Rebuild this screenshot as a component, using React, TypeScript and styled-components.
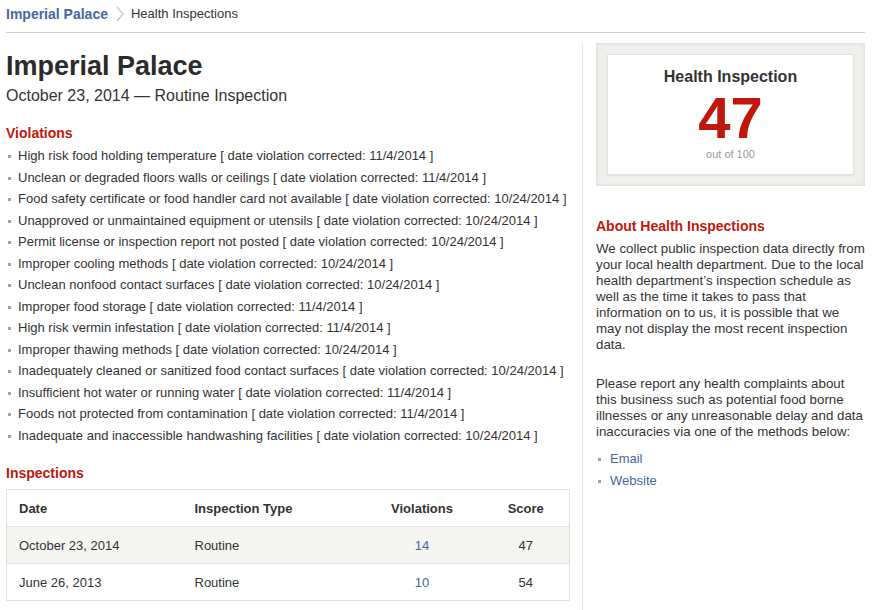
import React from "react";
import styled, { createGlobalStyle } from "styled-components";

const GlobalStyle = createGlobalStyle`
  html, body { margin: 0; padding: 0; background: #fff; }
  body { font-family: "Liberation Sans", Arial, sans-serif; color: #333; }
  * { box-sizing: border-box; }
`;

const RED = "#c0180c";
const BLUE = "#46679f";

const Page = styled.div`
  width: 873px;
  padding: 0 8px 0 6px;
`;

const Breadcrumb = styled.nav`
  display: flex;
  align-items: center;
  height: 33px;
  padding: 6px 0 10px;
  border-bottom: 1px solid #d0d0d0;
  font-size: 13px;
  line-height: 16px;
`;

const CrumbLink = styled.a`
  color: ${BLUE};
  font-weight: bold;
  font-size: 14px;
  text-decoration: none;
`;

const Chevron = styled.svg`
  width: 10px;
  height: 16px;
  margin: 0 6px 0 7px;
`;

const Main = styled.div`
  display: flex;
  padding-top: 10px;
`;

const LeftCol = styled.div`
  width: 577px;
  padding-right: 13px;
  padding-bottom: 30px;
  border-right: 1px solid #e6e6e6;
`;

const RightCol = styled.aside`
  flex: 1;
  padding-left: 13px;
`;

const Title = styled.h1`
  margin: 7px 0 4px;
  font-size: 27px;
  line-height: 32px;
  font-weight: bold;
  color: #2b2b2b;
`;

const Subtitle = styled.div`
  font-size: 16px;
  line-height: 20px;
  color: #333;
`;

const SectionTitle = styled.h2<{ $top: number }>`
  margin: ${(p) => p.$top}px 0 0;
  font-size: 14px;
  line-height: 18px;
  font-weight: bold;
  color: ${RED};
`;

const BulletList = styled.ul<{ $top: number }>`
  list-style: none;
  margin: ${(p) => p.$top}px 0 0;
  padding: 0;
`;

const BulletItem = styled.li<{ $indent?: number }>`
  position: relative;
  padding-left: ${(p) => p.$indent ?? 12}px;
  font-size: 13px;
  line-height: 21.5px;
  color: #333;
  &::before {
    content: "";
    position: absolute;
    left: 2px;
    top: 10px;
    width: 3px;
    height: 3px;
    background: #a0a0a0;
  }
`;

const Link = styled.a`
  color: ${BLUE};
  text-decoration: none;
`;

const Table = styled.table`
  margin-top: 7px;
  width: 563px;
  border-collapse: collapse;
  border: 1px solid #dedede;
  table-layout: fixed;
  font-size: 13px;
`;

const Row = styled.tr<{ $shaded?: boolean }>`
  background: ${(p) => (p.$shaded ? "#f4f4f1" : "#fff")};
  border-bottom: 1px solid #e2e2e2;
`;

const HeadCell = styled.th<{ $w: number; $center?: boolean }>`
  width: ${(p) => p.$w}px;
  height: 37px;
  padding: 0 0 0 ${(p) => (p.$center ? 0 : 12)}px;
  text-align: ${(p) => (p.$center ? "center" : "left")};
  font-weight: bold;
  color: #333;
`;

const Cell = styled.td<{ $center?: boolean }>`
  height: 37px;
  padding: 0 0 0 ${(p) => (p.$center ? 0 : 12)}px;
  text-align: ${(p) => (p.$center ? "center" : "left")};
  color: #333;
`;

const ScoreOuter = styled.div`
  padding: 10px;
  background: #efefec;
  border: 1px solid #e3e3e0;
  box-shadow: inset 0 0 4px rgba(0, 0, 0, 0.06);
`;

const ScoreInner = styled.div`
  display: flex;
  flex-direction: column;
  align-items: center;
  padding: 12px 10px 13px;
  background: #fff;
  border: 1px solid #e4e4e2;
  box-shadow: 0 1px 2px rgba(0, 0, 0, 0.05);
`;

const ScoreTitle = styled.div`
  font-size: 16px;
  line-height: 20px;
  font-weight: bold;
  color: #333;
`;

const ScoreValue = styled.div`
  font-size: 58px;
  line-height: 56px;
  font-weight: bold;
  color: ${RED};
  margin: 3px 0 1px;
`;

const ScoreCaption = styled.div`
  font-size: 11px;
  line-height: 14px;
  color: #999;
`;

const Para = styled.p<{ $top: number; $bottom: number }>`
  margin: ${(p) => p.$top}px 0 ${(p) => p.$bottom}px;
  font-size: 13.3px;
  line-height: 16px;
  color: #333;
`;

const violations: [string, string][] = [
  ["High risk food holding temperature", "11/4/2014"],
  ["Unclean or degraded floors walls or ceilings", "11/4/2014"],
  ["Food safety certificate or food handler card not available", "10/24/2014"],
  ["Unapproved or unmaintained equipment or utensils", "10/24/2014"],
  ["Permit license or inspection report not posted", "10/24/2014"],
  ["Improper cooling methods", "10/24/2014"],
  ["Unclean nonfood contact surfaces", "10/24/2014"],
  ["Improper food storage", "11/4/2014"],
  ["High risk vermin infestation", "11/4/2014"],
  ["Improper thawing methods", "10/24/2014"],
  ["Inadequately cleaned or sanitized food contact surfaces", "10/24/2014"],
  ["Insufficient hot water or running water", "11/4/2014"],
  ["Foods not protected from contamination", "11/4/2014"],
  ["Inadequate and inaccessible handwashing facilities", "10/24/2014"],
];

const inspections = [
  { date: "October 23, 2014", type: "Routine", violations: 14, score: 47 },
  { date: "June 26, 2013", type: "Routine", violations: 10, score: 54 },
];

export default function App() {
  return (
    <Page>
      <GlobalStyle />
      <Breadcrumb>
        <CrumbLink href="#">Imperial Palace</CrumbLink>
        <Chevron viewBox="0 0 10 16">
          <polyline points="2,1 8,8 2,15" fill="none" stroke="#c8c8c8" strokeWidth="1.3" />
        </Chevron>
        <span>Health Inspections</span>
      </Breadcrumb>
      <Main>
        <LeftCol>
          <Title>Imperial Palace</Title>
          <Subtitle>October 23, 2014 — Routine Inspection</Subtitle>
          <SectionTitle $top={18}>Violations</SectionTitle>
          <BulletList $top={3}>
            {violations.map(([text, date]) => (
              <BulletItem key={text}>
                {text} [ date violation corrected: {date} ]
              </BulletItem>
            ))}
          </BulletList>
          <SectionTitle $top={18}>Inspections</SectionTitle>
          <Table>
            <thead>
              <Row>
                <HeadCell $w={176}>Date</HeadCell>
                <HeadCell $w={179}>Inspection Type</HeadCell>
                <HeadCell $w={121} $center>Violations</HeadCell>
                <HeadCell $w={87} $center>Score</HeadCell>
              </Row>
            </thead>
            <tbody>
              {inspections.map((r, i) => (
                <Row key={r.date} $shaded={i === 0}>
                  <Cell>{r.date}</Cell>
                  <Cell>{r.type}</Cell>
                  <Cell $center>
                    <Link href="#">{r.violations}</Link>
                  </Cell>
                  <Cell $center>{r.score}</Cell>
                </Row>
              ))}
            </tbody>
          </Table>
        </LeftCol>
        <RightCol>
          <ScoreOuter>
            <ScoreInner>
              <ScoreTitle>Health Inspection</ScoreTitle>
              <ScoreValue>47</ScoreValue>
              <ScoreCaption>out of 100</ScoreCaption>
            </ScoreInner>
          </ScoreOuter>
          <SectionTitle $top={31}>About Health Inspections</SectionTitle>
          <Para $top={6} $bottom={23}>
            We collect public inspection data directly from your local health department. Due to the
            local health department’s inspection schedule as well as the time it takes to pass that
            information on to us, it is possible that we may not display the most recent inspection
            data.
          </Para>
          <Para $top={0} $bottom={0}>
            Please report any health complaints about this business such as potential food borne
            illnesses or any unreasonable delay and data inaccuracies via one of the methods below:
          </Para>
          <BulletList $top={8}>
            <BulletItem $indent={14}>
              <Link href="#">Email</Link>
            </BulletItem>
            <BulletItem $indent={14}>
              <Link href="#">Website</Link>
            </BulletItem>
          </BulletList>
        </RightCol>
      </Main>
    </Page>
  );
}
